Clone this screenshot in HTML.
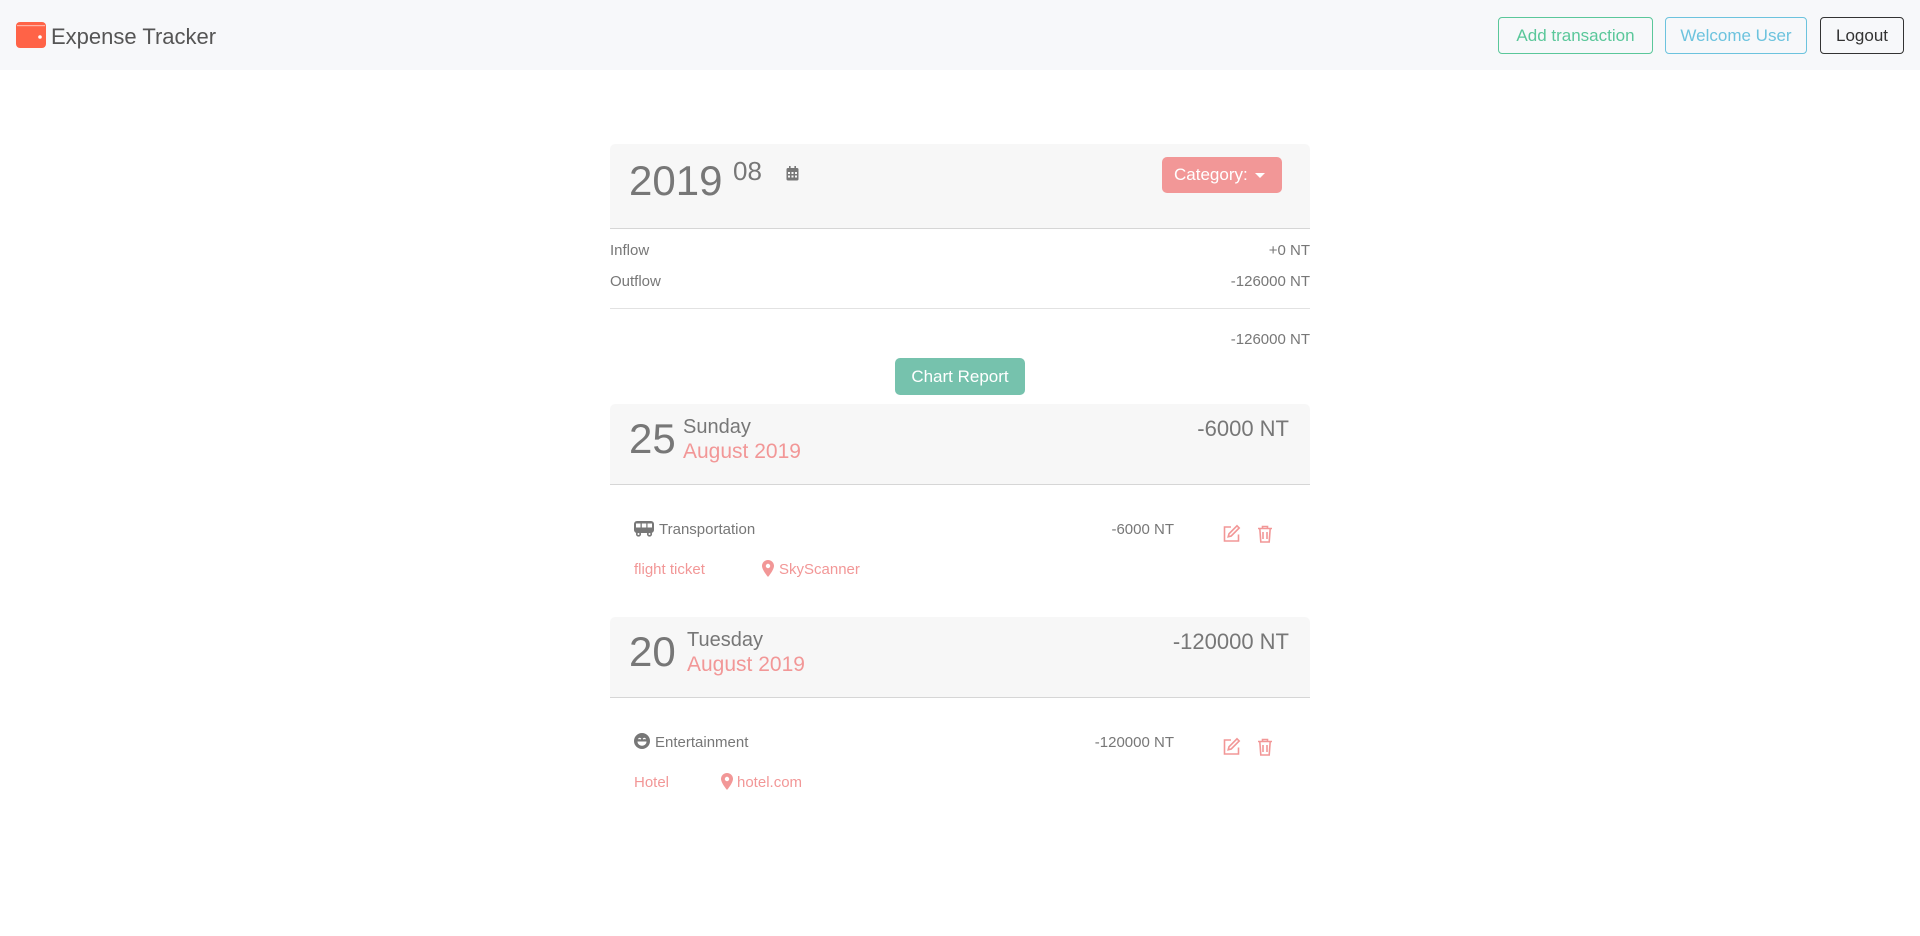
<!DOCTYPE html>
<html><head><meta charset="utf-8"><style>
*{box-sizing:border-box;margin:0;padding:0}
body{width:1920px;height:936px;background:#fff;font-family:"Liberation Sans",sans-serif;position:relative;overflow:hidden;color:#777}
.a{position:absolute;white-space:nowrap}
.nav{position:absolute;left:0;top:0;width:1920px;height:70px;background:#f7f8fa}
.btn{position:absolute;height:37px;top:17px;border:1px solid;border-radius:4px;font-size:17px;line-height:35px;text-align:center;background:transparent}
.hdr{position:absolute;left:610px;width:700px;background:#f7f7f7;border-radius:5px 5px 0 0;border-bottom:1px solid #d6d6d6}
.pink{color:#f29797}
.r{text-align:right}
</style></head><body>
<div class="nav"></div>
<svg class="a" style="left:16px;top:22px" width="30" height="26" viewBox="0 0 30 26"><rect x="0" y="0" width="30" height="26" rx="4" fill="#ff6347"/><rect x="1" y="3" width="28" height="1.2" fill="#ffb3a5"/><circle cx="24" cy="15" r="1.8" fill="#fff"/></svg>
<div class="a" style="left:51px;top:24px;font-size:22px;color:#555">Expense Tracker</div>
<div class="btn" style="left:1498px;width:155px;color:#5ac79a;border-color:#5ac79a">Add transaction</div>
<div class="btn" style="left:1665px;width:142px;color:#6cc3de;border-color:#6cc3de">Welcome User</div>
<div class="btn" style="left:1820px;width:84px;color:#333;border-color:#333">Logout</div>

<div class="hdr" style="top:144px;height:85px"></div>
<div class="a" style="left:629px;top:157px;font-size:42px;color:#777">2019</div>
<div class="a" style="left:733px;top:156px;font-size:26px;color:#777">08</div>
<svg class="a" style="left:786px;top:166px" width="13" height="15" viewBox="0 0 13 15"><rect x="0.5" y="2" width="12" height="12.5" rx="1.5" fill="#777"/><rect x="3" y="0" width="1.6" height="3" fill="#777"/><rect x="8.4" y="0" width="1.6" height="3" fill="#777"/><g fill="#f7f7f7"><rect x="2" y="6" width="2" height="2"/><rect x="5.5" y="6" width="2" height="2"/><rect x="9" y="6" width="2" height="2"/><rect x="2" y="9.5" width="2" height="2"/><rect x="5.5" y="9.5" width="2" height="2"/><rect x="9" y="9.5" width="2" height="2"/></g></svg>
<div class="a" style="left:1162px;top:157px;width:120px;height:36px;background:#f29797;border-radius:5px;color:#fff;font-size:17px;line-height:36px;padding-left:12px">Category: <span style="display:inline-block;border:5px solid transparent;border-top-color:#fff;border-bottom:0;vertical-align:middle;margin-left:3px"></span></div>

<div class="a" style="left:610px;top:242px;font-size:15px">Inflow</div>
<div class="a r" style="left:1110px;width:200px;top:242px;font-size:15px">+0 NT</div>
<div class="a" style="left:610px;top:273px;font-size:15px">Outflow</div>
<div class="a r" style="left:1110px;width:200px;top:273px;font-size:15px">-126000 NT</div>
<div class="a" style="left:610px;top:308px;width:700px;height:1px;background:#e2e2e2"></div>
<div class="a r" style="left:1110px;width:200px;top:331px;font-size:15px">-126000 NT</div>
<div class="a" style="left:895px;top:358px;width:130px;height:37px;background:#76c2ad;border-radius:5px;color:#fff;font-size:17px;line-height:37px;text-align:center">Chart Report</div>

<div class="hdr" style="top:404px;height:81px"></div>
<div class="a" style="left:629px;top:415px;font-size:42px">25</div>
<div class="a" style="left:683px;top:416px;font-size:20px">Sunday</div>
<div class="a pink" style="left:683px;top:440px;font-size:21px">August 2019</div>
<div class="a r" style="left:1089px;width:200px;top:416px;font-size:22px">-6000 NT</div>
<svg class="a" style="left:634px;top:521px" width="20" height="16" viewBox="0 0 20 16"><rect x="0" y="0" width="20" height="12" rx="3" fill="#777"/><rect x="2" y="2.5" width="4.5" height="4" fill="#fff"/><rect x="7.8" y="2.5" width="4.5" height="4" fill="#fff"/><rect x="13.5" y="2.5" width="4.5" height="4" fill="#fff"/><circle cx="4.5" cy="13" r="2.6" fill="#777"/><circle cx="15.5" cy="13" r="2.6" fill="#777"/><circle cx="4.5" cy="13" r="1" fill="#fff"/><circle cx="15.5" cy="13" r="1" fill="#fff"/></svg>
<div class="a" style="left:659px;top:521px;font-size:15px">Transportation</div>
<div class="a r" style="left:1024px;width:150px;top:521px;font-size:15px">-6000 NT</div>
<svg class="a" style="left:1222px;top:524px" width="19" height="19" viewBox="0 0 19 19" fill="none" stroke="#f29797" stroke-width="1.6"><path d="M9 3H2.5v14h14v-6.5"/><path d="M15 1.8l2.2 2.2-8 8-3 .8.8-3z"/></svg>
<svg class="a" style="left:1257px;top:525px" width="16" height="18" viewBox="0 0 16 18" fill="none" stroke="#f29797" stroke-width="1.6"><path d="M1 3.5h14M5.5 3.5V1.5h5v2M2.8 3.5l1 13.5h8.4l1-13.5M6 7v7M10 7v7"/></svg>
<div class="a pink" style="left:634px;top:561px;font-size:15px">flight ticket</div>
<svg class="a" style="left:762px;top:560px" width="12" height="17" viewBox="0 0 12 17"><path d="M6 0C2.7 0 0 2.6 0 5.9 0 10 6 17 6 17s6-7 6-11.1C12 2.6 9.3 0 6 0z" fill="#f29797"/><circle cx="6" cy="6" r="2.2" fill="#fff"/></svg>
<div class="a pink" style="left:779px;top:561px;font-size:15px">SkyScanner</div>

<div class="hdr" style="top:617px;height:81px"></div>
<div class="a" style="left:629px;top:628px;font-size:42px">20</div>
<div class="a" style="left:687px;top:629px;font-size:20px">Tuesday</div>
<div class="a pink" style="left:687px;top:653px;font-size:21px">August 2019</div>
<div class="a r" style="left:1089px;width:200px;top:629px;font-size:22px">-120000 NT</div>
<svg class="a" style="left:634px;top:733px" width="16" height="16" viewBox="0 0 16 16"><circle cx="8" cy="8" r="8" fill="#777"/><path d="M3.5 8.5h9c0 2.5-2 4.2-4.5 4.2S3.5 11 3.5 8.5z" fill="#fff"/><path d="M4.5 6.2q1.2-1.6 2.4 0M9.1 6.2q1.2-1.6 2.4 0" stroke="#fff" stroke-width="1.2" fill="none"/></svg>
<div class="a" style="left:655px;top:734px;font-size:15px">Entertainment</div>
<div class="a r" style="left:1024px;width:150px;top:734px;font-size:15px">-120000 NT</div>
<svg class="a" style="left:1222px;top:737px" width="19" height="19" viewBox="0 0 19 19" fill="none" stroke="#f29797" stroke-width="1.6"><path d="M9 3H2.5v14h14v-6.5"/><path d="M15 1.8l2.2 2.2-8 8-3 .8.8-3z"/></svg>
<svg class="a" style="left:1257px;top:738px" width="16" height="18" viewBox="0 0 16 18" fill="none" stroke="#f29797" stroke-width="1.6"><path d="M1 3.5h14M5.5 3.5V1.5h5v2M2.8 3.5l1 13.5h8.4l1-13.5M6 7v7M10 7v7"/></svg>
<div class="a pink" style="left:634px;top:774px;font-size:15px">Hotel</div>
<svg class="a" style="left:721px;top:773px" width="12" height="17" viewBox="0 0 12 17"><path d="M6 0C2.7 0 0 2.6 0 5.9 0 10 6 17 6 17s6-7 6-11.1C12 2.6 9.3 0 6 0z" fill="#f29797"/><circle cx="6" cy="6" r="2.2" fill="#fff"/></svg>
<div class="a pink" style="left:737px;top:774px;font-size:15px">hotel.com</div>
</body></html>
